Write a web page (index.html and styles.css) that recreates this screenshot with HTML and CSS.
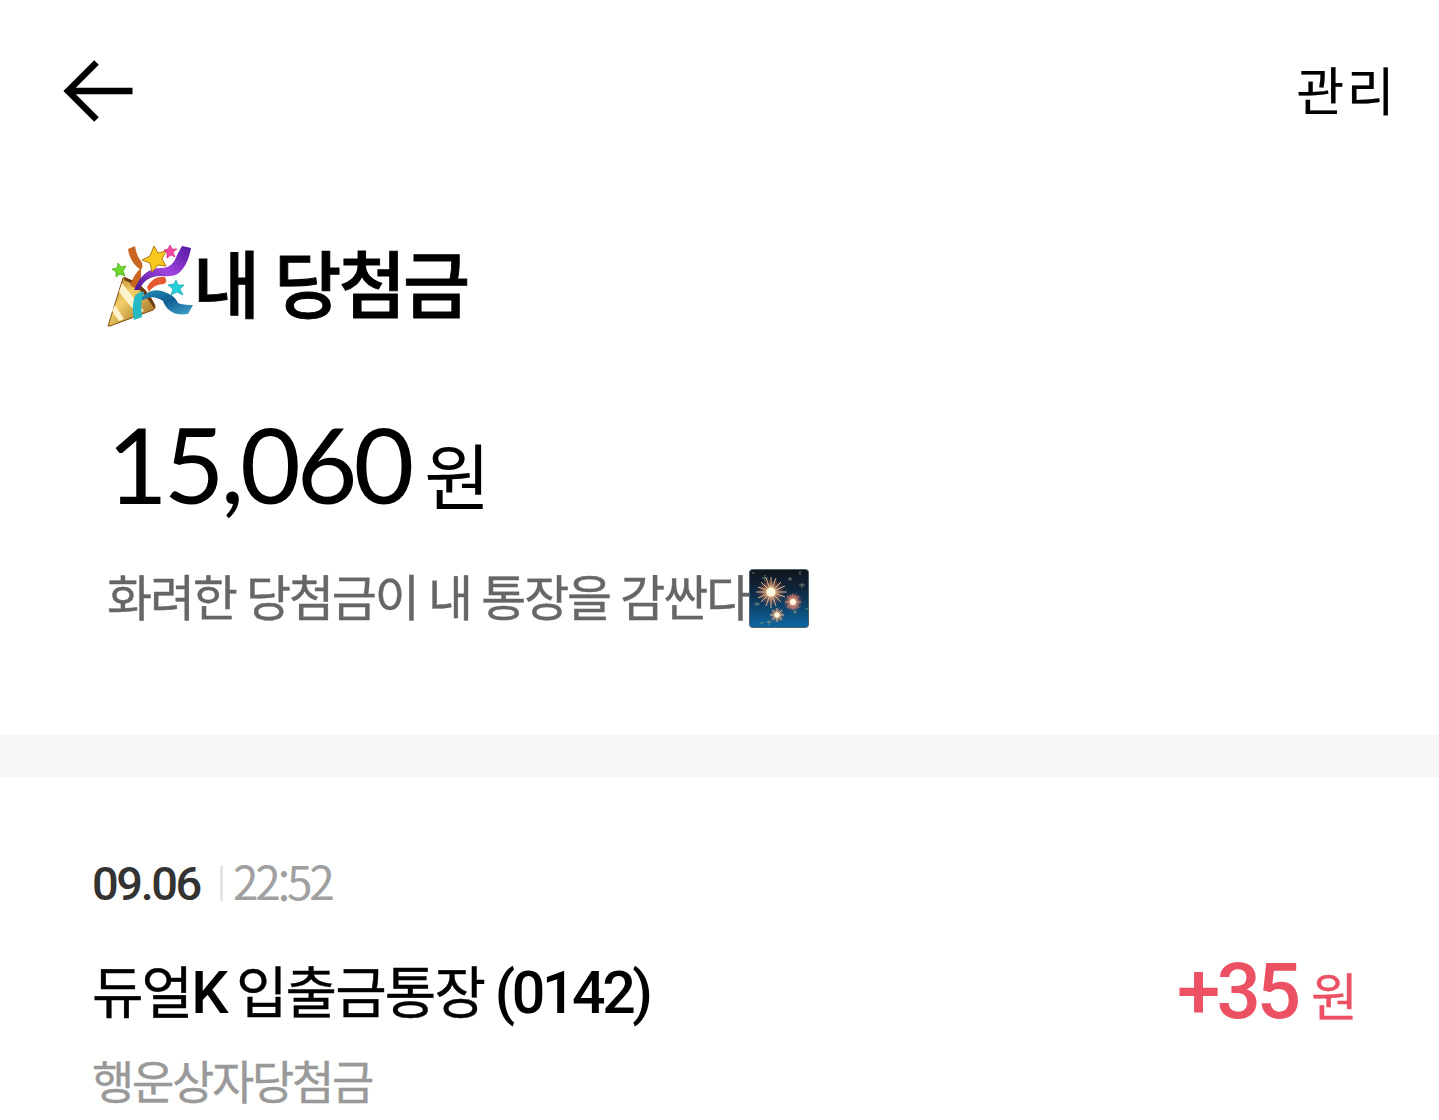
FILE: index.html
```
<!DOCTYPE html>
<html lang="ko">
<head>
  <meta charset="UTF-8">
  <meta name="viewport" content="width=device-width, initial-scale=1.0">
  <title>내 당첨금</title>
  <link rel="stylesheet" href="styles.css">
</head>
<body>
  <header class="top-bar">
    <a class="back" href="#" aria-label="뒤로">
      <svg width="72" height="64" viewBox="0 0 72 64" fill="none" stroke="#000" stroke-width="6.5">
        <path d="M33.5 3.5 5 32l28.5 28.5M5 32H69.5"/>
      </svg>
    </a>
    <a class="manage" href="#">관리</a>
  </header>

  <section class="summary">
    <h1 class="title">
      <!-- party popper -->
      <svg class="popper" width="88" height="84" viewBox="0 0 88 84">
        <defs>
          <linearGradient id="cone" x1="0" y1="0" x2="1" y2="1">
            <stop offset="0" stop-color="#a76c14"/>
            <stop offset=".4" stop-color="#f3cf68"/>
            <stop offset="1" stop-color="#8c5710"/>
          </linearGradient>
          <linearGradient id="purple" x1="0" y1="1" x2="1" y2="0">
            <stop offset="0" stop-color="#4b168d"/>
            <stop offset=".5" stop-color="#a044df"/>
            <stop offset="1" stop-color="#5415a0"/>
          </linearGradient>
          <linearGradient id="blue" x1="0" y1="0" x2="1" y2="1">
            <stop offset="0" stop-color="#2593bd"/>
            <stop offset=".5" stop-color="#125e91"/>
            <stop offset="1" stop-color="#42a8ce"/>
          </linearGradient>
        </defs>
        <path fill="url(#cone)" stroke="#80500f" d="M1 82 16 34q2-2 5 1 18 6 27 27 1 2-2 4L3 82z"/>
        <path fill="#fff3cf" d="m15 39 22 28-7 3-18-22zM8 61l9 14-5 2-7-10z"/>
        <path fill="#6c3b13" d="M18 34q18 4 30 27l-1 3Q33 42 17 36z"/>
        <path fill="#c96620" d="M21 5 28 2q1 9 6 15 3 5 0 9Q23 19 21 5zM34 24v14l-7 6-4-3q4-11 11-17z"/>
        <path fill="#e5592c" d="M40 43q7-12 18-10 3 5-1 7-10 0-15 8z"/>
        <path fill="url(#purple)" d="M27 46q9-22 27-22 12 0 16-13l5-9 9 2q-3 17-12 25-5 4-17 3-16-1-23 14z"/>
        <path fill="url(#blue)" d="M32 56q13-15 28-7 8 3 11 10 5 2 15 2l-5 9q-19 3-25-13-11-7-20-1z"/>
        <path fill="#25b9c3" d="M28 52q5-5 9-4-4 8-2 25l-8 3q-3-14 1-24z"/>
        <path fill="#fac620" stroke="#b57c13" d="m47 2 4 7 8-2-4 8 4 7-8-1-6 7-2-9-8-3 8-4z"/>
        <path fill="#f247a2" stroke="#c82a7b" stroke-width=".7" d="m63 1 2 4 5 0-4 3 2 5-4-2-4 3 0-5-3-3 4-1z"/>
        <path fill="#6ed92b" stroke="#43a51c" stroke-width=".7" d="m11 19 3 4 5-1-3 5 2 5-5-2-4 3 0-5-4-3 5-1z"/>
        <path fill="#23cfd8" stroke="#159fac" stroke-width=".7" d="m69 36 2 5 6 0-4 4 3 6-6-3-6 3 2-6-5-4 6-1z"/>
      </svg>
      <span class="title-text">내 당첨금</span>
    </h1>
    <p class="balance"><span class="number">15,060</span><span class="won">원</span></p>
    <p class="message">
      <span class="message-text">화려한 당첨금이 내 통장을 감싼다</span>
      <!-- fireworks -->
      <svg class="fireworks" width="60" height="60" viewBox="0 0 60 60">
        <defs>
          <linearGradient id="night" x1="0" y1="0" x2="0" y2="1">
            <stop offset="0" stop-color="#10151c"/>
            <stop offset=".35" stop-color="#10263e"/>
            <stop offset="1" stop-color="#0c68a3"/>
          </linearGradient>
          <radialGradient id="glow">
            <stop offset="0" stop-color="#fff8dc"/>
            <stop offset=".35" stop-color="#eba77b" stop-opacity=".8"/>
            <stop offset="1" stop-color="#953e3e" stop-opacity="0"/>
          </radialGradient>
        </defs>
        <rect x=".5" y=".5" width="59" height="58" rx="3" fill="url(#night)" stroke="#52616e"/>
        <g fill="url(#glow)">
          <circle cx="22" cy="23" r="14"/>
          <circle cx="44" cy="33" r="10"/>
          <circle cx="28" cy="46" r="8"/>
        </g>
        <g stroke="#efc18e" stroke-width=".9">
          <path d="M22 8v31M7 23h31M12 13l20 20M32 13 12 33M17 9l10 28M27 9 17 37M9 18l27 10M36 17 9 29"/>
          <path stroke="#f1897f" d="M44 25v16M36 33h16M38 27l12 12M50 27 38 39M41 26l6 14M47 26l-6 14"/>
          <path stroke="#d4c4a4" d="M28 39v14M21 46h14M23 41l10 10M33 41 23 51"/>
        </g>
        <g fill="#fff9df">
          <circle cx="22" cy="23" r="4.5"/>
          <circle cx="44" cy="33" r="3"/>
          <circle cx="28" cy="46" r="2.5"/>
        </g>
        <path stroke="#81957f" stroke-width=".8" d="M16 6v6M13 9h6M41 8v4M39 10h4M53 14v5M50 16h6M8 33v4M5 35h6M46 41v4M44 43h4M51 2v4M20 51v5M17 53h6M3 4h3M11 54h4M56 40h3"/>
      </svg>
    </p>
  </section>

  <section class="history">
    <div class="datetime">
      <span class="date">09.06</span>
      <span class="bar"></span>
      <span class="time">22<span class="colon">:</span>52</span>
    </div>
    <div class="entry">
      <span class="account">듀얼<span class="latin">K</span> 입출금통장 <span class="latin">(0142)</span></span>
      <span class="amount">+35<span class="unit">원</span></span>
    </div>
    <p class="memo">행운상자당첨금</p>
  </section>
</body>
</html>
```

FILE: styles.css
```
* {
  box-sizing: border-box;
}

body {
  margin: 0;
  height: 1120px;
  overflow: hidden;
  background: #fff;
  color: #000;
  font-family: "Noto Sans CJK KR", sans-serif;
  white-space: nowrap;
}

h1, p {
  margin: 0;
}

svg {
  display: block;
  flex: none;
}

a {
  color: inherit;
  text-decoration: none;
}

.top-bar {
  display: flex;
  justify-content: space-between;
  align-items: center;
  height: 182px;
  padding: 0 42px 0 63px;
}

.manage {
  padding-bottom: 4px;
  font-size: 52px;
  line-height: 80px;
  letter-spacing: 2.5px;
  -webkit-text-stroke: 0.2px;
}

/* Winnings summary */
.summary {
  height: 553px;
  padding: 53px 107px 0;
}

.title {
  display: flex;
  align-items: center;
  height: 104px;
  font-size: 73px;
  font-weight: 500;
  letter-spacing: -2.7px;
  word-spacing: -1px;
}

.popper {
  margin: -2px -2px 0 0;
}

.title-text {
  padding-bottom: 14px;
  line-height: 104px;
  -webkit-text-stroke: 0.9px;
}

.balance {
  display: flex;
  align-items: baseline;
  height: 130px;
  margin-top: 59px;
}

.number {
  font-family: Lato, sans-serif;
  font-size: 105px;
  line-height: 130px;
  letter-spacing: -4.2px;
}

.won {
  margin-left: 14px;
  font-size: 72px;
  line-height: 100px;
}

.message {
  display: flex;
  align-items: center;
  height: 60px;
  margin-top: 41px;
  color: #666;
  font-size: 49px;
  line-height: 60px;
  letter-spacing: -2.2px;
  word-spacing: -1.1px;
}

.message-text {
  padding-bottom: 9px;
  -webkit-text-stroke: 0.4px;
}

/* Transactions */
.history {
  padding: 83px 81px 0 92px;
  border-top: 42px solid #f7f7f7;
}

.datetime {
  display: flex;
  align-items: center;
  height: 46px;
}

.date {
  color: #333;
  font-family: Roboto, sans-serif;
  font-size: 47px;
  font-weight: 500;
  letter-spacing: -2.4px;
}

.bar {
  width: 3px;
  height: 35px;
  margin: 0 10px 0 20px;
  background: #e5e5e5;
}

.time {
  padding-bottom: 6px;
  color: #a0a0a0;
  font-size: 46px;
  line-height: 46px;
  letter-spacing: -3.3px;
}

.colon {
  position: relative;
  top: 5px;
}

.entry {
  display: flex;
  justify-content: space-between;
  align-items: flex-start;
  height: 100px;
  margin-top: 36px;
}

.account {
  font-size: 56px;
  line-height: 93px;
  letter-spacing: -1.9px;
  word-spacing: -3px;
  -webkit-text-stroke: 0.4px;
}

.latin {
  font-family: Roboto, sans-serif;
  font-size: 59px;
  font-weight: 500;
  letter-spacing: -3.4px;
  -webkit-text-stroke: 0;
}

.amount {
  color: #ec5063;
  font-family: Roboto, "Noto Sans CJK KR", sans-serif;
  font-size: 78px;
  font-weight: 500;
  line-height: 100px;
  letter-spacing: -4px;
}

.unit {
  margin-left: 14px;
  font-size: 51px;
  font-weight: 400;
  letter-spacing: 0;
  vertical-align: 2px;
  -webkit-text-stroke: 0.3px;
}

.memo {
  color: #999;
  font-size: 46px;
  line-height: 74px;
  letter-spacing: -2.3px;
  -webkit-text-stroke: 0.4px;
}
```
